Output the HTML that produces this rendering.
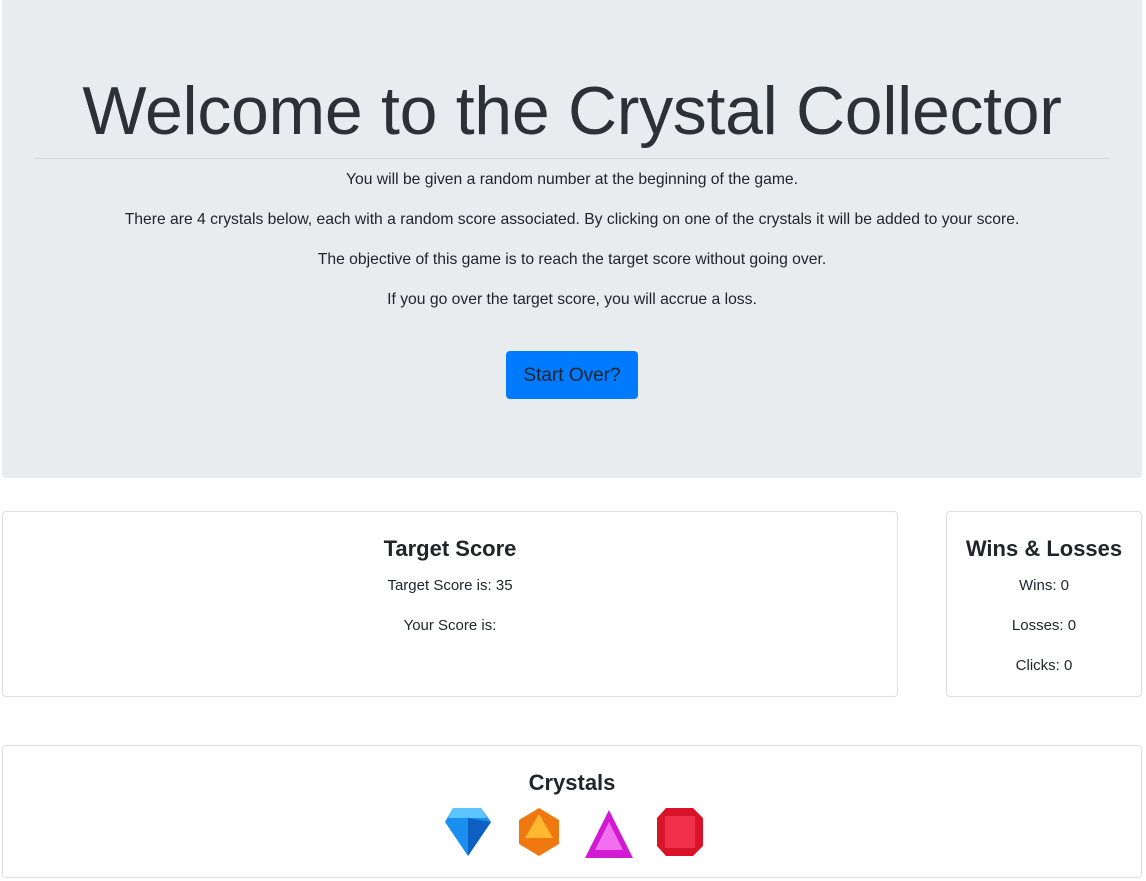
<!DOCTYPE html>
<html><head><style>
body{margin:0;font-family:"Liberation Sans",sans-serif;color:#212529;background:#fff;width:1146px;height:881px;overflow:hidden;position:relative}
.j{position:absolute;left:2px;top:0;width:1140px;height:478px;background:#e9ecef;border-radius:0 0 4px 4px;text-align:center}
h1{font-weight:300;font-size:68px;margin:0;position:absolute;top:72px;width:100%;letter-spacing:-0.3px;color:#2c3136}
hr{position:absolute;top:158px;left:33px;width:1074px;margin:0;border:0;border-top:1px solid #d3d6d9}
.p{position:absolute;width:100%;font-size:15.7px;top:0}
.btn{position:absolute;left:504px;top:351px;width:132px;height:48px;background:#007bff;border-radius:4px;font-size:19px;line-height:50px;color:#212529}
.card{position:absolute;border:1px solid #dfdfdf;border-radius:4px;text-align:center}
.card h3{font-size:22px;font-weight:bold;margin:0;position:absolute;width:100%;top:24px}
.card .t{position:absolute;width:100%;font-size:15px}
</style></head><body>
<div class="j">
<h1>Welcome to the Crystal Collector</h1>
<hr>
<div class="p" style="top:171px">You will be given a random number at the beginning of the game.</div>
<div class="p" style="top:211px">There are 4 crystals below, each with a random score associated. By clicking on one of the crystals it will be added to your score.</div>
<div class="p" style="top:251px">The objective of this game is to reach the target score without going over.</div>
<div class="p" style="top:291px">If you go over the target score, you will accrue a loss.</div>
<div class="btn">Start Over?</div>
</div>
<div class="card" style="left:2px;top:511px;width:894px;height:184px">
<h3>Target Score</h3>
<div class="t" style="top:65px">Target Score is: 35</div>
<div class="t" style="top:105px">Your Score is:</div>
</div>
<div class="card" style="left:946px;top:511px;width:194px;height:184px">
<h3>Wins &amp; Losses</h3>
<div class="t" style="top:65px">Wins: 0</div>
<div class="t" style="top:105px">Losses: 0</div>
<div class="t" style="top:145px">Clicks: 0</div>
</div>
<div class="card" style="left:2px;top:745px;width:1138px;height:131px">
<h3 style="top:24px">Crystals</h3>
<svg style="position:absolute;left:440px;top:60px" width="264" height="52">
<polygon points="10,2 38,2 48,16 25,50 2,16" fill="#1a8ff0"/><polygon points="10,2 38,2 44,12 5,12" fill="#5cc4ff"/><polygon points="25,50 25,12 48,16" fill="#0d5fc2"/>
<polygon points="96,2 116,14 116,38 96,50 76,38 76,14" fill="#f07810"/><polygon points="96,8 110,32 82,32" fill="#ffb830"/>
<polygon points="166,4 190,52 142,52" fill="#d21ad2"/><polygon points="166,16 180,44 152,44" fill="#f070f0"/>
<polygon points="223,2 250,2 260,12 260,40 250,50 223,50 214,40 214,12" fill="#d91428"/><rect x="222" y="10" width="30" height="32" fill="#f0304a"/>
</svg>
</div>
</body></html>
